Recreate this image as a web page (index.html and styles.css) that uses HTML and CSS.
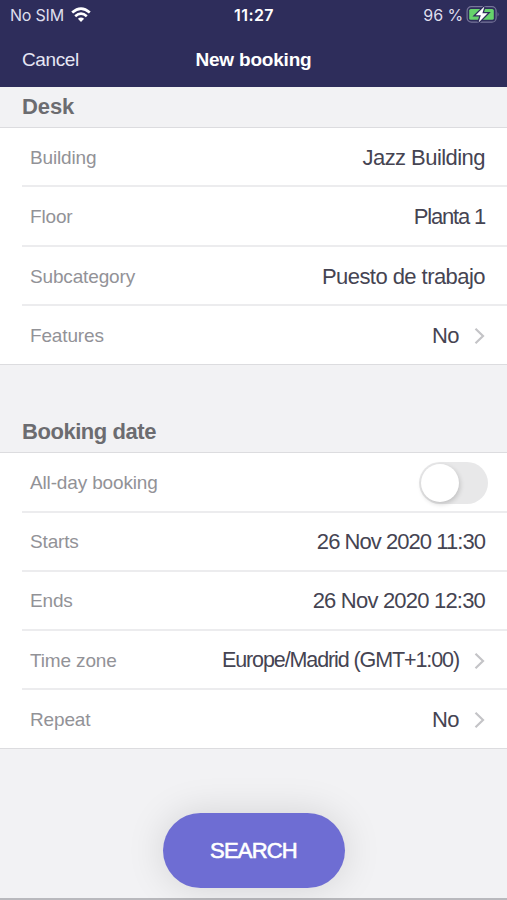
FILE: index.html
```html
<!DOCTYPE html>
<html lang="en">
<head>
    <meta charset="UTF-8">
    <meta name="viewport" content="width=device-width, initial-scale=1.0">
    <title>New booking</title>
    <link rel="stylesheet" href="styles.css">
</head>
<body>
    <header class="header">
        <div class="status-bar">
            <div class="carrier">
                <span class="carrier-name">No SIM</span>
                <svg class="wifi" width="20" height="16" viewBox="0 0 20 16">
                    <path d="M1.2 5.6 Q10 -2.2 18.8 5.6" fill="none" stroke="#fff" stroke-width="2.7"/>
                    <path d="M4.2 9.2 Q10 4 15.8 9.2" fill="none" stroke="#fff" stroke-width="2.6"/>
                    <path d="M6.9 11.7 Q10 9.2 13.1 11.7 L10 15z" fill="#fff"/>
                </svg>
            </div>
            <span class="clock">11:27</span>
            <div class="battery">
                <span class="battery-level">96 %</span>
                <svg width="34" height="20" viewBox="0 0 34 20">
                    <rect x="1.1" y="1.7" width="29" height="15.4" rx="4.2" fill="none" stroke="#77759a" stroke-width="1.2"/>
                    <path d="M31.6 7q1.9 2.4 0 4.8z" fill="#77759a"/>
                    <rect x="3.2" y="4" width="24.6" height="10.8" rx="1.6" fill="#66d36b"/>
                    <path d="M18.4 1.6L9.6 10.3h5.2L12.6 17.4L21.7 8.2h-5.3z" fill="#fff" stroke="#2e2d5b" stroke-width="2.6" paint-order="stroke"/>
                </svg>
            </div>
        </div>
        <nav class="nav-bar">
            <span class="cancel">Cancel</span>
            <h1 class="title">New booking</h1>
        </nav>
    </header>

    <main class="content">
        <h2 class="section-title section-title-first">Desk</h2>
        <div class="list">
            <div class="row">
                <span class="label">Building</span>
                <span class="value">Jazz Building</span>
            </div>
            <div class="row">
                <span class="label">Floor</span>
                <span class="value value-floor">Planta 1</span>
            </div>
            <div class="row">
                <span class="label">Subcategory</span>
                <span class="value">Puesto de trabajo</span>
            </div>
            <div class="row">
                <span class="label">Features</span>
                <span class="value">No</span>
                <svg class="chevron" width="11" height="18" viewBox="0 0 11 18"><path d="M1.5 1.8L9 9l-7.5 7.2"/></svg>
            </div>
        </div>

        <h2 class="section-title">Booking date</h2>
        <div class="list list-date">
            <div class="row">
                <span class="label">All-day booking</span>
                <span class="switch"><span class="knob"></span></span>
            </div>
            <div class="row">
                <span class="label">Starts</span>
                <span class="value value-starts">26 Nov 2020 11:30</span>
            </div>
            <div class="row">
                <span class="label">Ends</span>
                <span class="value value-ends">26 Nov 2020 12:30</span>
            </div>
            <div class="row">
                <span class="label">Time zone</span>
                <span class="value value-zone">Europe/Madrid (GMT+1:00)</span>
                <svg class="chevron" width="11" height="18" viewBox="0 0 11 18"><path d="M1.5 1.8L9 9l-7.5 7.2"/></svg>
            </div>
            <div class="row">
                <span class="label">Repeat</span>
                <span class="value">No</span>
                <svg class="chevron" width="11" height="18" viewBox="0 0 11 18"><path d="M1.5 1.8L9 9l-7.5 7.2"/></svg>
            </div>
        </div>

        <button class="search" type="button">SEARCH</button>
    </main>
</body>
</html>
```
FILE: styles.css
```css
* {
    box-sizing: border-box;
}

body {
    margin: 0;
    height: 900px;
    display: flex;
    flex-direction: column;
    overflow: hidden;
    font-family: "Liberation Sans", Arial, sans-serif;
    background: #f2f2f4;
}

/* header */
.header {
    height: 87px;
    color: #fff;
    background: #2e2d5b;
}

.status-bar {
    display: grid;
    grid-template-columns: 1fr auto 1fr;
    align-items: center;
    height: 30px;
    padding: 0 7px 0 10px;
    font-family: Inter, sans-serif;
    font-size: 16px;
}

.carrier,
.battery {
    display: flex;
    align-items: center;
}

.carrier {
    gap: 7px;
    letter-spacing: -0.2px;
    color: #dedeed;
}

.battery {
    justify-content: flex-end;
    gap: 3px;
    letter-spacing: -0.1px;
    color: #dedeed;
}

.clock {
    font-weight: 600;
    letter-spacing: 0.4px;
    margin-right: 2px;
}

.nav-bar {
    display: grid;
    grid-template-columns: 1fr auto 1fr;
    align-items: center;
    height: 57px;
    padding: 2px 22px 0;
}

.cancel {
    font-size: 19px;
    letter-spacing: -0.4px;
    color: #e6e6f4;
}

.title {
    margin: 0;
    font-size: 19px;
    font-weight: bold;
    letter-spacing: -0.2px;
}

/* form */
.content {
    flex: 1;
    display: flex;
    flex-direction: column;
    border-bottom: 2px solid #b9b9bd;
}

.section-title {
    margin: 0;
    height: 87px;
    padding: 54px 22px 0;
    font-size: 22px;
    line-height: 26px;
    letter-spacing: -0.45px;
    color: #6c6c70;
}

.section-title-first {
    height: 40px;
    padding-top: 7px;
    letter-spacing: -0.1px;
}

.list {
    padding-left: 22px;
    background: #fff;
    border-top: 1px solid #dcdcdf;
    border-bottom: 1px solid #dcdcdf;
}

.row {
    display: flex;
    align-items: center;
    height: 59.25px;
    padding: 3px 22px 0 8px;
    border-bottom: 2px solid #ececee;
}

.row:last-child {
    height: 58.5px;
    padding-top: 1px;
    border-bottom: 0;
}

.list-date .row {
    padding-top: 2px;
}

.list-date .row:last-child {
    height: 57.5px;
    padding-top: 1px;
}

.label {
    flex: 1;
    font-size: 19px;
    letter-spacing: -0.15px;
    color: #929297;
}

.value {
    font-size: 22px;
    letter-spacing: -0.55px;
    color: #454452;
}

.value-floor {
    letter-spacing: -1.2px;
}

.value-starts {
    letter-spacing: -0.95px;
}

.value-ends {
    letter-spacing: -0.8px;
}

.value-zone {
    font-size: 21.5px;
    letter-spacing: -1.1px;
}

.chevron {
    margin-left: 15px;
    fill: none;
    stroke: #c4c4c7;
    stroke-width: 2.2;
}

.switch {
    width: 69px;
    height: 42px;
    margin-right: -3px;
    padding: 2px;
    border-radius: 21px;
    background: #e8e8e9;
}

.knob {
    display: block;
    width: 38px;
    height: 38px;
    border-radius: 50%;
    background: #fff;
    box-shadow: 1px 2px 5px rgba(0, 0, 0, 0.18);
}

.search {
    align-self: center;
    width: 182px;
    height: 75px;
    margin-top: 64px;
    padding: 2px 0 0;
    border: 0;
    border-radius: 38px;
    font-family: inherit;
    font-size: 22px;
    letter-spacing: -0.8px;
    color: #fff;
    -webkit-text-stroke: 0.6px #fff;
    background: #6e6dd3;
    box-shadow: 0 0 38px rgba(0, 0, 0, 0.13);
}
```
